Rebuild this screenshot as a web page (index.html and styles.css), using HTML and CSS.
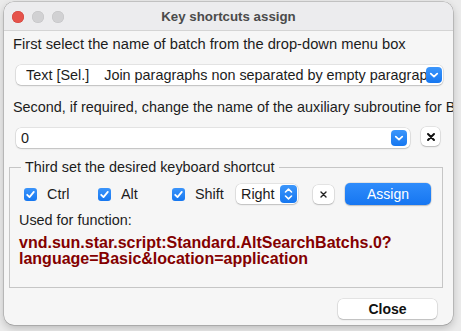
FILE: index.html
```html
<!DOCTYPE html>
<html>
<head>
<meta charset="utf-8">
<link rel="stylesheet" href="styles.css">
</head>
<body>
<div class="window">
  <div class="titlebar">
    <div class="lights">
      <span class="light red"></span>
      <span class="light gray"></span>
      <span class="light gray"></span>
    </div>
    <div class="title">Key shortcuts assign</div>
  </div>
  <div class="content">
    <div class="label first">First select the name of batch from the drop-down menu box</div>
    <div class="select wide">
      <div class="select-text"><span class="cat">Text [Sel.]</span><span>Join paragraphs non separated by empty paragraphs</span></div>
      <span class="chev">
        <svg width="16" height="16" viewBox="0 0 16 16"><path d="M4.8 6.6 L8 9.6 L11.2 6.6" fill="none" stroke="#fff" stroke-width="1.8" stroke-linecap="round" stroke-linejoin="round"/></svg>
      </span>
    </div>
    <div class="label second">Second, if required, change the name of the auxiliary subroutine for Basic</div>
    <div class="row2">
      <div class="select sub">
        <div class="select-text">0</div>
        <span class="chev">
          <svg width="16" height="16" viewBox="0 0 16 16"><path d="M4.8 6.6 L8 9.6 L11.2 6.6" fill="none" stroke="#fff" stroke-width="1.8" stroke-linecap="round" stroke-linejoin="round"/></svg>
        </span>
      </div>
      <button class="btn xbtn bold-x">
        <svg width="10" height="10" viewBox="0 0 10 10"><path d="M2 2 L8 8 M8 2 L2 8" stroke="#111" stroke-width="2" stroke-linecap="round"/></svg>
      </button>
    </div>
    <fieldset class="group">
      <legend>Third set the desired keyboard shortcut</legend>
      <div class="keys">
        <label class="check"><span class="box"><svg width="13" height="13" viewBox="0 0 13 13"><path d="M3.2 6.8 L5.5 9.1 L9.8 3.9" fill="none" stroke="#fff" stroke-width="1.8" stroke-linecap="round" stroke-linejoin="round"/></svg></span>Ctrl</label>
        <label class="check"><span class="box"><svg width="13" height="13" viewBox="0 0 13 13"><path d="M3.2 6.8 L5.5 9.1 L9.8 3.9" fill="none" stroke="#fff" stroke-width="1.8" stroke-linecap="round" stroke-linejoin="round"/></svg></span>Alt</label>
        <label class="check last"><span class="box"><svg width="13" height="13" viewBox="0 0 13 13"><path d="M3.2 6.8 L5.5 9.1 L9.8 3.9" fill="none" stroke="#fff" stroke-width="1.8" stroke-linecap="round" stroke-linejoin="round"/></svg></span>Shift</label>
        <div class="select keysel">
          <div class="select-text">Right</div>
          <span class="spin">
            <svg width="17" height="18" viewBox="0 0 17 18"><path d="M5.5 7 L8.5 4.2 L11.5 7 M5.5 11 L8.5 13.8 L11.5 11" fill="none" stroke="#fff" stroke-width="1.6" stroke-linecap="round" stroke-linejoin="round"/></svg>
          </span>
        </div>
        <button class="btn xbtn small-x">
          <svg width="9" height="9" viewBox="0 0 9 9"><path d="M2 2 L7 7 M7 2 L2 7" stroke="#222" stroke-width="1.4" stroke-linecap="round"/></svg>
        </button>
        <button class="btn primary">Assign</button>
      </div>
      <div class="label used">Used for function:</div>
      <div class="func">vnd.sun.star.script:Standard.AltSearchBatchs.0?<br>language=Basic&amp;location=application</div>
    </fieldset>
    <div class="footer">
      <button class="btn close">Close</button>
    </div>
  </div>
</div>
</body>
</html>
```

FILE: styles.css
```css
* { box-sizing: border-box; }
html, body {
  margin: 0;
  padding: 0;
  width: 461px;
  height: 331px;
  overflow: hidden;
  background: #ebebeb;
  font-family: "Liberation Sans", Arial, sans-serif;
}
body { padding: 2px 0 0 4px; }
.window {
  width: 449px;
  height: 323px;
  border-radius: 10px;
  background: #f6f6f6;
  box-shadow: 0 0 0 0.5px rgba(0,0,0,0.28), 0 3px 9px rgba(0,0,0,0.22);
  overflow: hidden;
  display: flex;
  flex-direction: column;
}
.titlebar {
  height: 29px;
  flex: none;
  background: #ececee;
  border-bottom: 1px solid #d4d4d4;
  display: flex;
  align-items: center;
  position: relative;
}
.lights {
  display: flex;
  gap: 8px;
  padding-left: 8px;
  position: absolute;
  left: 0;
  top: 9px;
}
.light {
  width: 12px;
  height: 12px;
  border-radius: 50%;
}
.light.red { background: #e5534b; box-shadow: inset 0 0 0 0.5px #d0403a; }
.light.gray { background: #d1d1d3; box-shadow: inset 0 0 0 0.5px #c2c2c4; }
.title {
  flex: 1;
  text-align: center;
  font-weight: bold;
  font-size: 13.3px;
  color: #4b4b4b;
  padding-top: 1px;
}
.content {
  flex: 1;
  padding: 0 0 0 9px;
  overflow: hidden;
  display: flex;
  flex-direction: column;
  color: #1c1c1c;
  font-size: 14.4px;
}
.label {
  line-height: 16px;
  white-space: nowrap;
}
.first { margin-top: 5px; font-size: 14.7px; }
.second { margin-top: 14px; }
.select {
  height: 20px;
  background: #fff;
  border-radius: 5px;
  box-shadow: 0 0 0 0.5px rgba(0,0,0,0.14), 0 1px 1.5px rgba(0,0,0,0.16);
  display: flex;
  align-items: center;
  overflow: hidden;
}
.select-text {
  flex: 1;
  min-width: 0;
  overflow: hidden;
  white-space: nowrap;
  line-height: 20px;
}
.wide {
  margin-top: 13px;
  margin-left: 3px;
  width: 427px;
  padding-left: 10px;
  padding-right: 1px;
}
.cat { margin-right: 15px; }
.chev {
  flex: none;
  width: 16px;
  height: 16px;
  border-radius: 4px;
  background: linear-gradient(#3c96fb, #1677f0);
  display: flex;
}
.row2 {
  margin-top: 12px;
  margin-left: 3px;
  display: flex;
  align-items: flex-start;
}
.sub {
  width: 394px;
  padding-left: 5px;
  padding-right: 3px;
  margin-top: 1px;
}
.btn {
  font-family: inherit;
  border: none;
  background: #fff;
  border-radius: 5px;
  box-shadow: 0 0 0 0.5px rgba(0,0,0,0.14), 0 1px 1.5px rgba(0,0,0,0.18);
  padding: 0;
  display: flex;
  align-items: center;
  justify-content: center;
  color: #111;
  font-size: 14px;
}
.bold-x {
  width: 19px;
  height: 19px;
  margin-left: 11px;
}
.group {
  margin: 11px 0 0 -4px;
  width: 434px;
  border: 1px solid #c6c6c6;
  padding: 0 0 20px 9px;
  min-width: 0;
}
.group legend {
  padding: 0 4px;
  margin-left: 2px;
  line-height: 16px;
  font-size: 14.4px;
}
.keys {
  margin-top: 8px;
  height: 22px;
  display: flex;
  align-items: center;
}
.check {
  width: 74px;
  display: flex;
  align-items: center;
  padding-left: 5px;
  line-height: 16px;
}
.check.last { width: 69px; }
.box {
  width: 13px;
  height: 13px;
  border-radius: 3px;
  background: linear-gradient(#3b94fa, #1677f0);
  margin-right: 10px;
  display: flex;
}
.keysel {
  width: 62px;
  height: 20px;
  padding-left: 5px;
  padding-right: 1px;
}
.spin {
  flex: none;
  width: 17px;
  height: 18px;
  border-radius: 4px;
  background: linear-gradient(#3c96fb, #1677f0);
  display: flex;
}
.small-x {
  width: 21px;
  height: 19px;
  margin-left: 15px;
}
.primary {
  width: 86px;
  height: 22px;
  margin-left: 11px;
  background: linear-gradient(#2f8cfb, #1676f1);
  color: #fff;
  font-size: 14px;
  border-radius: 5px;
}
.used { margin-top: 7px; }
.func {
  margin-top: 7px;
  color: #840000;
  font-weight: bold;
  font-size: 16px;
  line-height: 16px;
  white-space: nowrap;
}
.footer {
  margin-top: 11px;
  padding-right: 16px;
  display: flex;
  justify-content: flex-end;
}
.close {
  width: 99px;
  height: 20px;
  font-weight: bold;
  font-size: 14px;
}
```
